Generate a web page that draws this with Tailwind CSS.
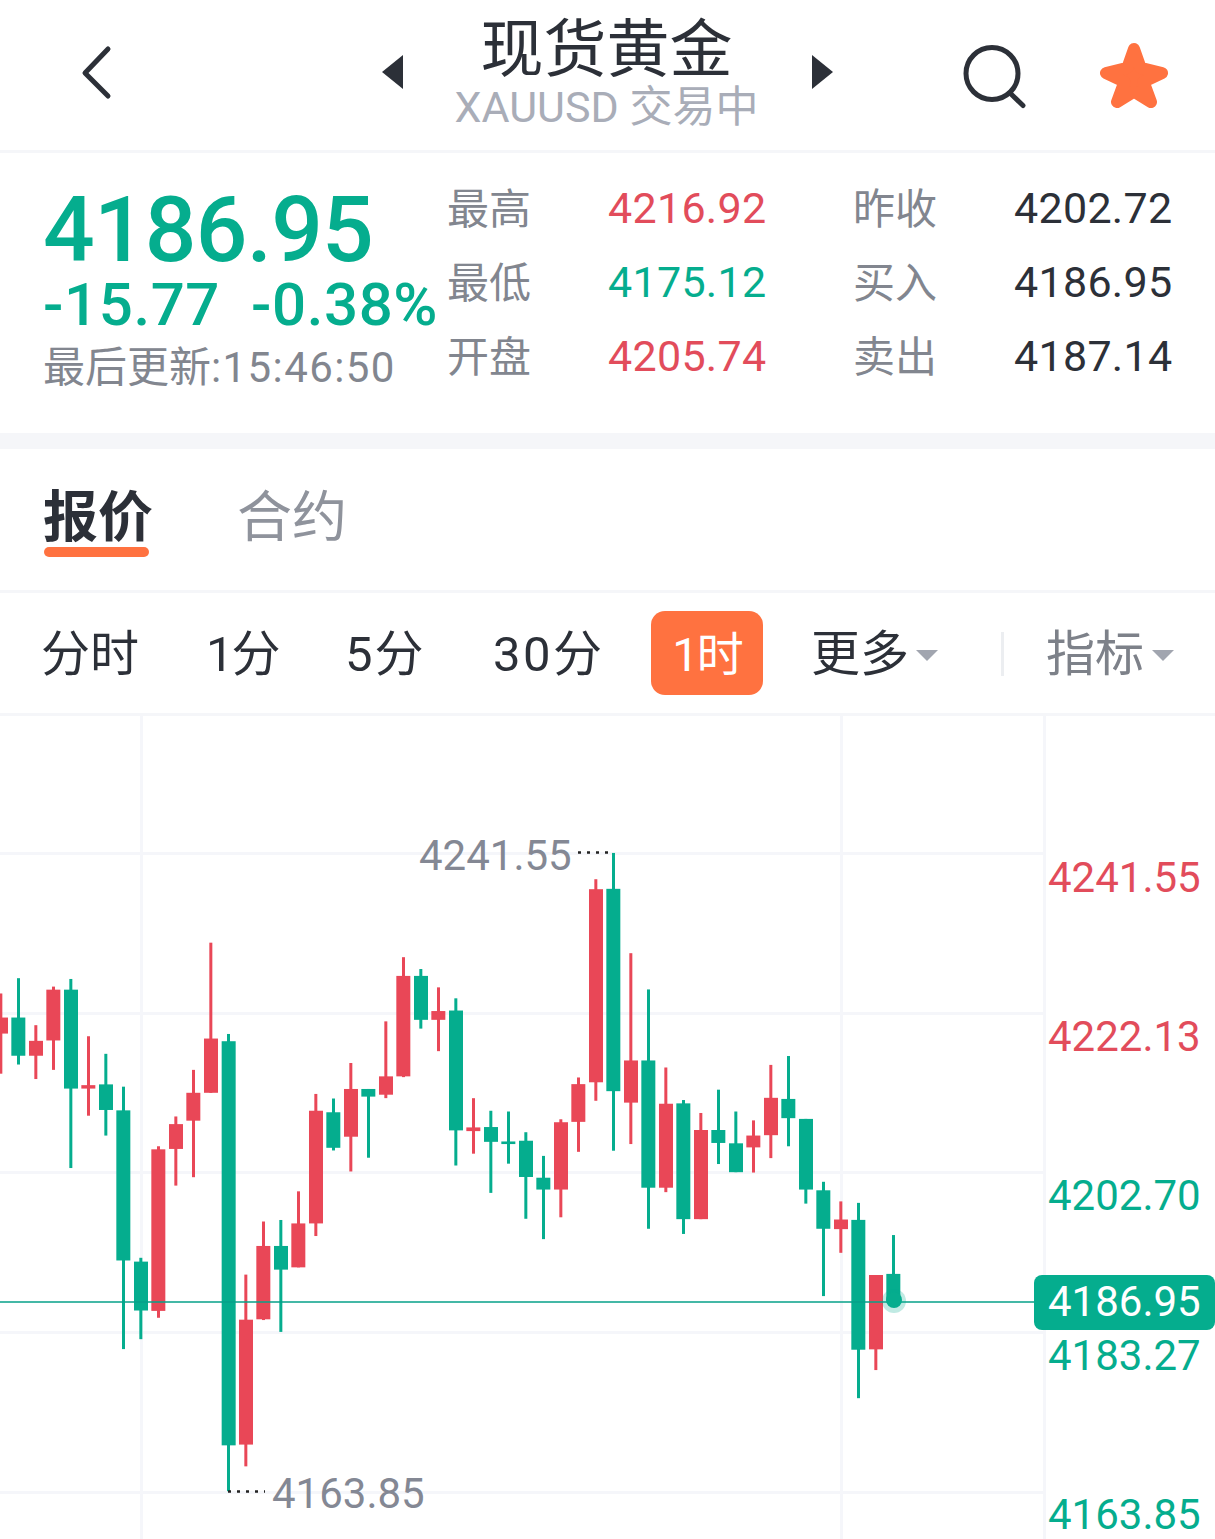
<!DOCTYPE html>
<html lang="zh">
<head>
<meta charset="utf-8">
<script src="https://cdn.jsdelivr.net/npm/@tailwindcss/browser@4"></script>
</head>
<body class="bg-white">
<div class="relative w-[1215px] h-[1539px] overflow-hidden bg-white text-[#2c3038] font-['Roboto','Noto_Sans_CJK_SC',sans-serif]">

  <header class="flex items-center h-[153px] border-b-[3px] border-[#f5f6f9]">
    <svg class="ml-[78px] w-[36px] h-[56px] -mt-[4px]" viewBox="0 0 36 56"><path d="M30 4 L7 28 L30 51" fill="none" stroke="#2c3038" stroke-width="5" stroke-linecap="round" stroke-linejoin="round"/></svg>
    <svg class="ml-[268px] w-[22px] h-[34px] -mt-[7px]" viewBox="0 0 22 34"><path d="M21 0V34L0 17Z" fill="#2c3038"/></svg>
    <div class="w-[408px] pr-[3px] self-start pt-[10px] flex flex-col items-center">
      <div class="h-[68px] text-[63px] leading-[68px] font-['Noto_Sans_CJK_SC',sans-serif]">现货黄金</div>
      <div class="h-[48px] mt-[5px] text-[43px] leading-[48px] text-[#a9adb8] whitespace-nowrap">XAUUSD 交易中</div>
    </div>
    <svg class="-ml-[1px] w-[22px] h-[34px] -mt-[7px]" viewBox="0 0 22 34"><path d="M1 0V34L22 17Z" fill="#2c3038"/></svg>
    <svg class="ml-[129px] w-[68px] h-[68px] mt-[6px]" viewBox="0 0 68 68"><circle cx="30" cy="29.5" r="26" fill="none" stroke="#2c3038" stroke-width="5"/><path d="M48 49 L61 61.5" stroke="#2c3038" stroke-width="5" stroke-linecap="round"/></svg>
    <svg class="ml-[70px] w-[70px] h-[68px] mt-[2px]" viewBox="0 0 70 68"><path d="M34 7 L40.7 25.9 L62 31 L43.5 39.7 L51 60 L34 49.7 L17 60 L24.5 39.7 L6 31 L27.3 25.9Z" fill="#ff7240" stroke="#ff7240" stroke-width="12" stroke-linejoin="round"/></svg>
  </header>

  <section class="flex h-[280px] pl-[43px]">
    <div class="w-[404px] shrink-0 pt-[33px]">
      <div class="text-[91px] leading-[88px] font-medium tracking-[-0.8px] text-[#05ad8e]">4186.95</div>
      <div class="flex text-[60px] leading-[60px] font-medium tracking-[0.6px] text-[#05ad8e] mt-[1px] whitespace-nowrap"><span class="w-[208px]">-15.77</span><span>-0.38%</span></div>
      <div class="text-[42px] leading-[48px] text-[#82868f] mt-[9px] whitespace-nowrap">最后更新<span class="tracking-[1.4px]">:15:46:50</span></div>
    </div>
    <div class="grid grid-cols-[161px_245px_161px_160px] auto-rows-[74px] pt-[18px] text-[43px] leading-[74px] tracking-[0.3px] h-fit">
      <span class="translate-y-[2px] text-[42px] text-[#82868f] tracking-normal">最高</span><span class="text-[#e24c5b]">4216.92</span><span class="translate-y-[2px] text-[42px] text-[#82868f] tracking-normal">昨收</span><span>4202.72</span>
      <span class="translate-y-[2px] text-[42px] text-[#82868f] tracking-normal">最低</span><span class="text-[#05ad8e]">4175.12</span><span class="translate-y-[2px] text-[42px] text-[#82868f] tracking-normal">买入</span><span>4186.95</span>
      <span class="translate-y-[2px] text-[42px] text-[#82868f] tracking-normal">开盘</span><span class="text-[#e24c5b]">4205.74</span><span class="translate-y-[2px] text-[42px] text-[#82868f] tracking-normal">卖出</span><span>4187.14</span>
    </div>
  </section>

  <div class="h-[16px] bg-[#f5f6f9]"></div>

  <nav class="flex h-[144px] pl-[43px] border-b-[3px] border-[#f5f6f9] text-[55px] whitespace-nowrap">
    <div class="w-[194px] pt-[36px]">
      <div class="w-[108px] relative font-bold leading-[64px] whitespace-nowrap">报价<div class="absolute left-[1px] right-[2px] top-[62px] h-[10px] rounded-full bg-[#ff7240]"></div></div>
    </div>
    <div class="pt-[36px] leading-[64px] text-[#8f939c]">合约</div>
  </nav>

  <div class="relative flex items-center h-[123px] border-b-[3px] border-[#f5f6f9] text-[49px] whitespace-nowrap">
    <span class="ml-[41px] w-[165px] pt-[4px]">分时</span>
    <span class="w-[139px] pt-[4px] tracking-[-2px]">1分</span>
    <span class="w-[148px] pt-[4px] tracking-[2px]">5分</span>
    <span class="w-[158px] pt-[4px] tracking-[2.5px]">30分</span>
    <span class="w-[112px] h-[84px] pt-[4px] rounded-[14px] bg-[#ff7240] text-white text-[47px] tracking-[-2px] flex items-center justify-center">1时</span>
    <span class="ml-[48px] pt-[4px] flex items-center">更多<span class="ml-[7px] w-0 h-0 border-x-[11px] border-x-transparent border-t-[11px] border-t-[#a1a5af]"></span></span>
    <span class="ml-[63px] mt-[2px] w-[3px] h-[44px] bg-[#eceef1]"></span>
    <span class="ml-[42px] pt-[4px] flex items-center text-[#7d8189]">指标<span class="ml-[8px] w-0 h-0 border-x-[11px] border-x-transparent border-t-[11px] border-t-[#a1a5af]"></span></span>
  </div>

  <div class="absolute left-0 top-0 w-[1215px] h-[1539px] pointer-events-none">
    <svg class="absolute left-0 top-0" width="1215" height="1539" viewBox="0 0 1215 1539">
      <g fill="#f5f6fa">
        <rect x="140" y="716" width="3" height="823"/><rect x="840" y="716" width="3" height="823"/><rect x="1043" y="716" width="3" height="823"/>
        <rect x="0" y="852" width="1044" height="3"/><rect x="0" y="1012" width="1044" height="3"/><rect x="0" y="1171" width="1044" height="3"/><rect x="0" y="1331" width="1044" height="3"/><rect x="0" y="1491" width="1044" height="3"/>
      </g>
      <g transform="translate(0 940) scale(.33333 .38197)">
        <g fill="#e94757">
          <rect x="-2" y="140" width="9" height="210"/><rect x="-18" y="203" width="42" height="42"/>
          <rect x="103" y="223" width="9" height="141"/><rect x="87" y="264" width="42" height="39"/>
          <rect x="156" y="122" width="9" height="218"/><rect x="139" y="130" width="42" height="133"/>
          <rect x="261" y="252" width="9" height="208"/><rect x="244" y="380" width="42" height="9"/>
          <rect x="471" y="540" width="9" height="449"/><rect x="454" y="548" width="42" height="423"/>
          <rect x="523" y="462" width="9" height="181"/><rect x="507" y="482" width="42" height="65"/>
          <rect x="576" y="340" width="9" height="281"/><rect x="559" y="400" width="42" height="73"/>
          <rect x="628" y="7" width="9" height="393"/><rect x="612" y="258" width="42" height="142"/>
          <rect x="733" y="876" width="9" height="502"/><rect x="717" y="994" width="42" height="327"/>
          <rect x="786" y="737" width="9" height="258"/><rect x="769" y="801" width="42" height="192"/>
          <rect x="891" y="658" width="9" height="199"/><rect x="874" y="742" width="42" height="115"/>
          <rect x="943" y="403" width="9" height="372"/><rect x="927" y="447" width="42" height="295"/>
          <rect x="1048" y="322" width="9" height="284"/><rect x="1032" y="390" width="42" height="125"/>
          <rect x="1153" y="213" width="9" height="201"/><rect x="1137" y="357" width="42" height="48"/>
          <rect x="1206" y="45" width="9" height="314"/><rect x="1189" y="94" width="42" height="263"/>
          <rect x="1311" y="124" width="9" height="167"/><rect x="1294" y="186" width="42" height="23"/>
        </g>
        <g fill="#05ad8e">
          <rect x="51" y="100" width="9" height="226"/><rect x="34" y="203" width="42" height="100"/>
          <rect x="208" y="102" width="9" height="495"/><rect x="192" y="130" width="42" height="259"/>
          <rect x="313" y="298" width="9" height="214"/><rect x="297" y="378" width="42" height="67"/>
          <rect x="366" y="384" width="9" height="687"/><rect x="349" y="446" width="42" height="393"/>
          <rect x="418" y="832" width="9" height="213"/><rect x="402" y="842" width="42" height="128"/>
          <rect x="681" y="246" width="9" height="1197"/><rect x="665" y="265" width="42" height="1058"/>
          <rect x="838" y="733" width="9" height="293"/><rect x="822" y="801" width="42" height="62"/>
          <rect x="996" y="415" width="9" height="136"/><rect x="979" y="451" width="42" height="93"/>
          <rect x="1101" y="390" width="9" height="180"/><rect x="1084" y="390" width="42" height="20"/>
          <rect x="1258" y="76" width="9" height="156"/><rect x="1242" y="94" width="42" height="115"/>
        </g>
      </g>
      <g transform="translate(440 840) scale(.33333 .36990)">
        <g fill="#e94757">
          <rect x="96" y="698" width="9" height="150"/><rect x="79" y="777" width="42" height="10"/>
          <rect x="358" y="755" width="9" height="265"/><rect x="342" y="763" width="42" height="182"/>
          <rect x="411" y="642" width="9" height="201"/><rect x="394" y="660" width="42" height="102"/>
          <rect x="463" y="106" width="9" height="599"/><rect x="447" y="133" width="42" height="522"/>
          <rect x="568" y="306" width="9" height="516"/><rect x="552" y="596" width="42" height="114"/>
          <rect x="673" y="615" width="9" height="337"/><rect x="657" y="713" width="42" height="227"/>
          <rect x="778" y="738" width="9" height="287"/><rect x="762" y="784" width="42" height="241"/>
          <rect x="936" y="758" width="9" height="141"/><rect x="919" y="799" width="42" height="32"/>
          <rect x="988" y="608" width="9" height="252"/><rect x="972" y="697" width="42" height="101"/>
          <rect x="1198" y="977" width="9" height="139"/><rect x="1182" y="1026" width="42" height="26"/>
          <rect x="1303" y="1176" width="9" height="257"/><rect x="1287" y="1176" width="42" height="201"/>
        </g>
        <g fill="#05ad8e">
          <rect x="43" y="428" width="9" height="452"/><rect x="27" y="461" width="42" height="324"/>
          <rect x="148" y="732" width="9" height="222"/><rect x="132" y="776" width="42" height="40"/>
          <rect x="201" y="734" width="9" height="141"/><rect x="184" y="815" width="42" height="7"/>
          <rect x="253" y="790" width="9" height="234"/><rect x="237" y="813" width="42" height="98"/>
          <rect x="306" y="854" width="9" height="225"/><rect x="289" y="913" width="42" height="32"/>
          <rect x="516" y="35" width="9" height="805"/><rect x="499" y="132" width="42" height="547"/>
          <rect x="621" y="404" width="9" height="647"/><rect x="604" y="596" width="42" height="344"/>
          <rect x="726" y="703" width="9" height="362"/><rect x="709" y="712" width="42" height="313"/>
          <rect x="831" y="675" width="9" height="201"/><rect x="814" y="784" width="42" height="35"/>
          <rect x="883" y="734" width="9" height="164"/><rect x="867" y="820" width="42" height="78"/>
          <rect x="1041" y="584" width="9" height="244"/><rect x="1024" y="700" width="42" height="52"/>
          <rect x="1093" y="754" width="9" height="229"/><rect x="1077" y="754" width="42" height="191"/>
          <rect x="1146" y="924" width="9" height="309"/><rect x="1129" y="947" width="42" height="104"/>
          <rect x="1251" y="981" width="9" height="528"/><rect x="1234" y="1027" width="42" height="351"/>
          <rect x="1356" y="1068" width="9" height="120"/><rect x="1339" y="1173" width="42" height="72"/>
        </g>
      </g>
      <rect x="0" y="1301" width="1036" height="2" fill="#05a088" fill-opacity=".75"/>
      <circle cx="894" cy="1301" r="12" fill="#05ad8e" fill-opacity=".25"/>
      <circle cx="894" cy="1300" r="8" fill="#05ad8e"/>
      <path d="M578 852.5H614" stroke="#222" stroke-width="2.5" stroke-dasharray="3 6"/>
      <path d="M228 1491.5H265" stroke="#222" stroke-width="2.5" stroke-dasharray="3 6"/>
    </svg>
    <div class="absolute left-[419px] top-[832px] text-[42px] leading-[48px] text-[#848894]">4241.55</div>
    <div class="absolute left-[272px] top-[1470px] text-[42px] leading-[48px] text-[#848894]">4163.85</div>
    <div class="absolute left-[1048px] top-[854px] text-[42px] leading-[48px] text-[#e24c5b]">4241.55</div>
    <div class="absolute left-[1048px] top-[1013px] text-[42px] leading-[48px] text-[#e24c5b]">4222.13</div>
    <div class="absolute left-[1048px] top-[1172px] text-[42px] leading-[48px] text-[#05ad8e]">4202.70</div>
    <div class="absolute left-[1034px] top-[1275px] w-[181px] h-[55px] pl-[14px] rounded-[8px] bg-[#05ad8e] text-white text-[42px] leading-[53px]">4186.95</div>
    <div class="absolute left-[1048px] top-[1332px] text-[42px] leading-[48px] text-[#05ad8e]">4183.27</div>
    <div class="absolute left-[1048px] top-[1491px] text-[42px] leading-[48px] text-[#05ad8e]">4163.85</div>
  </div>
</div>
</body>
</html>
